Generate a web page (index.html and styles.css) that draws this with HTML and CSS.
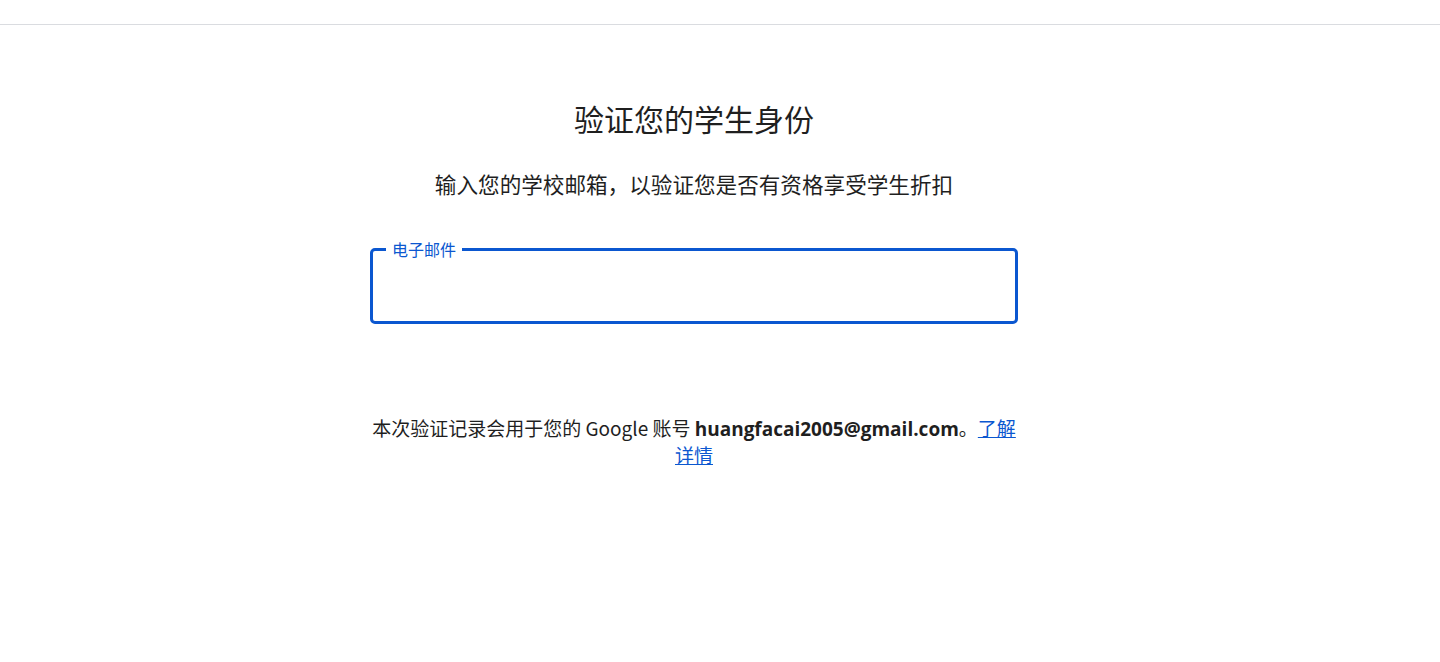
FILE: index.html
```html
<!DOCTYPE html>
<html lang="zh-CN">
<head>
<meta charset="utf-8">
<title>验证您的学生身份</title>
<link rel="stylesheet" href="styles.css">
</head>
<body>
<header class="topbar"></header>
<main class="page">
  <section class="card">
    <h1 class="title">验证您的学生身份</h1>
    <p class="subtitle">输入您的学校邮箱，以验证您是否有资格享受学生折扣</p>
    <label class="field">
      <span class="field-label">电子邮件</span>
      <input class="field-input" type="email">
    </label>
    <p class="note">本次验证记录会用于您的 Google 账号 <b class="email">huangfacai2005@gmail.com</b>。<a class="link" href="#">了解详情</a></p>
  </section>
</main>
</body>
</html>
```

FILE: styles.css
```css
html, body {
  margin: 0;
  padding: 0;
  background: #ffffff;
}
body {
  font-family: "Noto Sans CJK SC", "Noto Sans", sans-serif;
  color: #1f1f1f;
}
.topbar {
  height: 24px;
  border-bottom: 1px solid #dadce0;
}
.page {
  display: flex;
  justify-content: center;
  padding-right: 52px;
}
.card {
  width: 648px;
  display: flex;
  flex-direction: column;
  align-items: stretch;
  text-align: center;
}
.title {
  margin: 73px 0 0;
  font-size: 30px;
  line-height: 40px;
  font-weight: 400;
}
.subtitle {
  margin: 31px 0 0;
  font-size: 21.6px;
  line-height: 30px;
  font-weight: 400;
}
.field {
  position: relative;
  display: flex;
  align-items: center;
  margin: 49px 0 0;
  padding: 0 16px;
  height: 76px;
  box-sizing: border-box;
  border: 3px solid #0b57d0;
  border-radius: 5px;
  text-align: left;
}
.field-label {
  position: absolute;
  left: 13px;
  top: -12px;
  padding: 0 6px 0 6px;
  background: #ffffff;
  font-size: 16px;
  line-height: 20px;
  color: #0b57d0;
}
.field-input {
  border: none;
  outline: none;
  width: 100%;
  height: 44px;
  font-size: 16px;
  background: transparent;
}
.note {
  margin: 90px 0 0;
  font-size: 19px;
  line-height: 27px;
}
.email {
  font-family: "Open Sans", "Noto Sans CJK SC", sans-serif;
  font-weight: 700;
  line-height: 20px;
}
.link {
  color: #0b57d0;
  text-decoration: underline;
}
```
